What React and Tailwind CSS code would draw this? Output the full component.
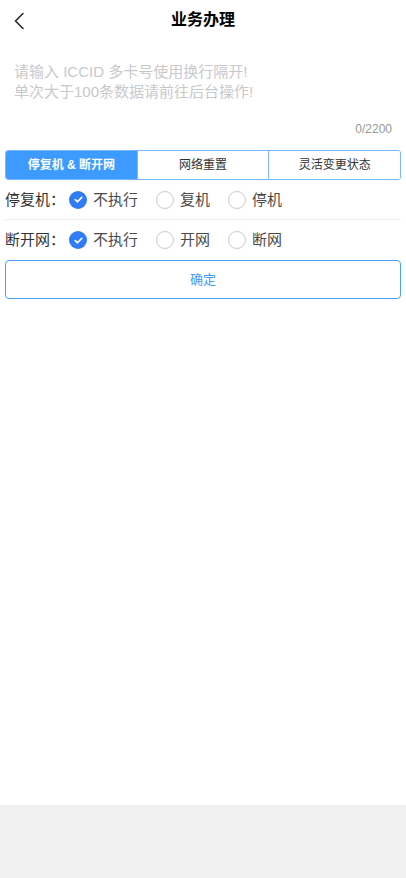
import { useState } from 'react';

const TABS = ['停复机 & 断开网', '网络重置', '灵活变更状态'];

const ROWS = [
  { key: 'power', label: '停复机：', options: ['不执行', '复机', '停机'] },
  { key: 'net', label: '断开网：', options: ['不执行', '开网', '断网'] },
];

const Radio = ({ checked, label, onClick }) => (
  <button type="button" onClick={onClick} className="flex items-center mr-[18px] focus:outline-none">
    {checked ? (
      <span className="w-[18px] h-[18px] rounded-full bg-[#2f7cf6] flex items-center justify-center">
        <svg width="11" height="11" viewBox="0 0 12 12" fill="none">
          <path d="M2.5 6.2l2.4 2.3 4.6-4.8" stroke="#fff" strokeWidth="1.8" strokeLinecap="round" strokeLinejoin="round" />
        </svg>
      </span>
    ) : (
      <span className="w-[18px] h-[18px] rounded-full border border-[#c8c9cc] bg-white" />
    )}
    <span className="ml-[6px] text-[15px] leading-[20px] text-[#4a4a4a]">{label}</span>
  </button>
);

export default function App() {
  const [text, setText] = useState('');
  const [tab, setTab] = useState(0);
  const [values, setValues] = useState({ power: 0, net: 0 });

  return (
    <div className="min-h-[878px] flex flex-col bg-[#f0f0f0]" style={{ fontFamily: '"Liberation Sans", "Noto Sans CJK SC", sans-serif' }}>
      <div className="bg-white h-[805px]">
        {/* header */}
        <div className="relative h-[40px] flex items-center justify-center">
          <button type="button" className="absolute left-[10px] top-[10px] p-[2px]">
            <svg width="16" height="18" viewBox="0 0 16 18" fill="none">
              <path d="M11 1.5L3.5 9l7.5 7.5" stroke="#222" strokeWidth="1.5" strokeLinecap="round" />
            </svg>
          </button>
          <span className="text-[16px] font-bold text-black">业务办理</span>
        </div>

        {/* textarea */}
        <div className="pt-[22px] px-[14px]">
          <textarea
            value={text}
            maxLength={2200}
            onChange={(e) => setText(e.target.value)}
            placeholder={'请输入 ICCID 多卡号使用换行隔开!\n单次大于100条数据请前往后台操作!'}
            className="block w-full h-[56px] resize-none outline-none text-[15px] leading-[20px] text-[#323233] placeholder:text-[#c8c9cc]"
          />
          <div className="mt-[3px] text-right text-[12px] leading-[16px] text-[#969799]">
            {text.length}/2200
          </div>
        </div>

        <div className="px-[5px] mt-[13px]">
          {/* tabs */}
          <div className="flex h-[30px] border border-[#7ab8ff] rounded-[3px] overflow-hidden">
            {TABS.map((t, i) => (
              <button
                key={t}
                type="button"
                onClick={() => setTab(i)}
                className={`flex-1 text-[12px] ${i > 0 ? 'border-l border-[#7ab8ff]' : ''} ${
                  tab === i ? 'bg-[#3d9bff] text-white font-bold' : 'bg-white text-[#323233]'
                }`}
              >
                {t}
              </button>
            ))}
          </div>

          {/* radio rows */}
          {ROWS.map((row, idx) => (
            <div
              key={row.key}
              className={`flex items-center h-[40px] ${idx === 0 ? 'border-b border-[#ebedf0]' : ''}`}
            >
              <span className="w-[64px] text-[15px] leading-[20px] text-[#323233]">{row.label}</span>
              {row.options.map((o, i) => (
                <Radio
                  key={o}
                  label={o}
                  checked={values[row.key] === i}
                  onClick={() => setValues({ ...values, [row.key]: i })}
                />
              ))}
            </div>
          ))}

          <button
            type="button"
            className="w-full h-[39px] border border-[#4aa0ff] rounded-[4px] text-[13px] text-[#3d9bff] bg-white"
          >
            确定
          </button>
        </div>
      </div>
    </div>
  );
}
